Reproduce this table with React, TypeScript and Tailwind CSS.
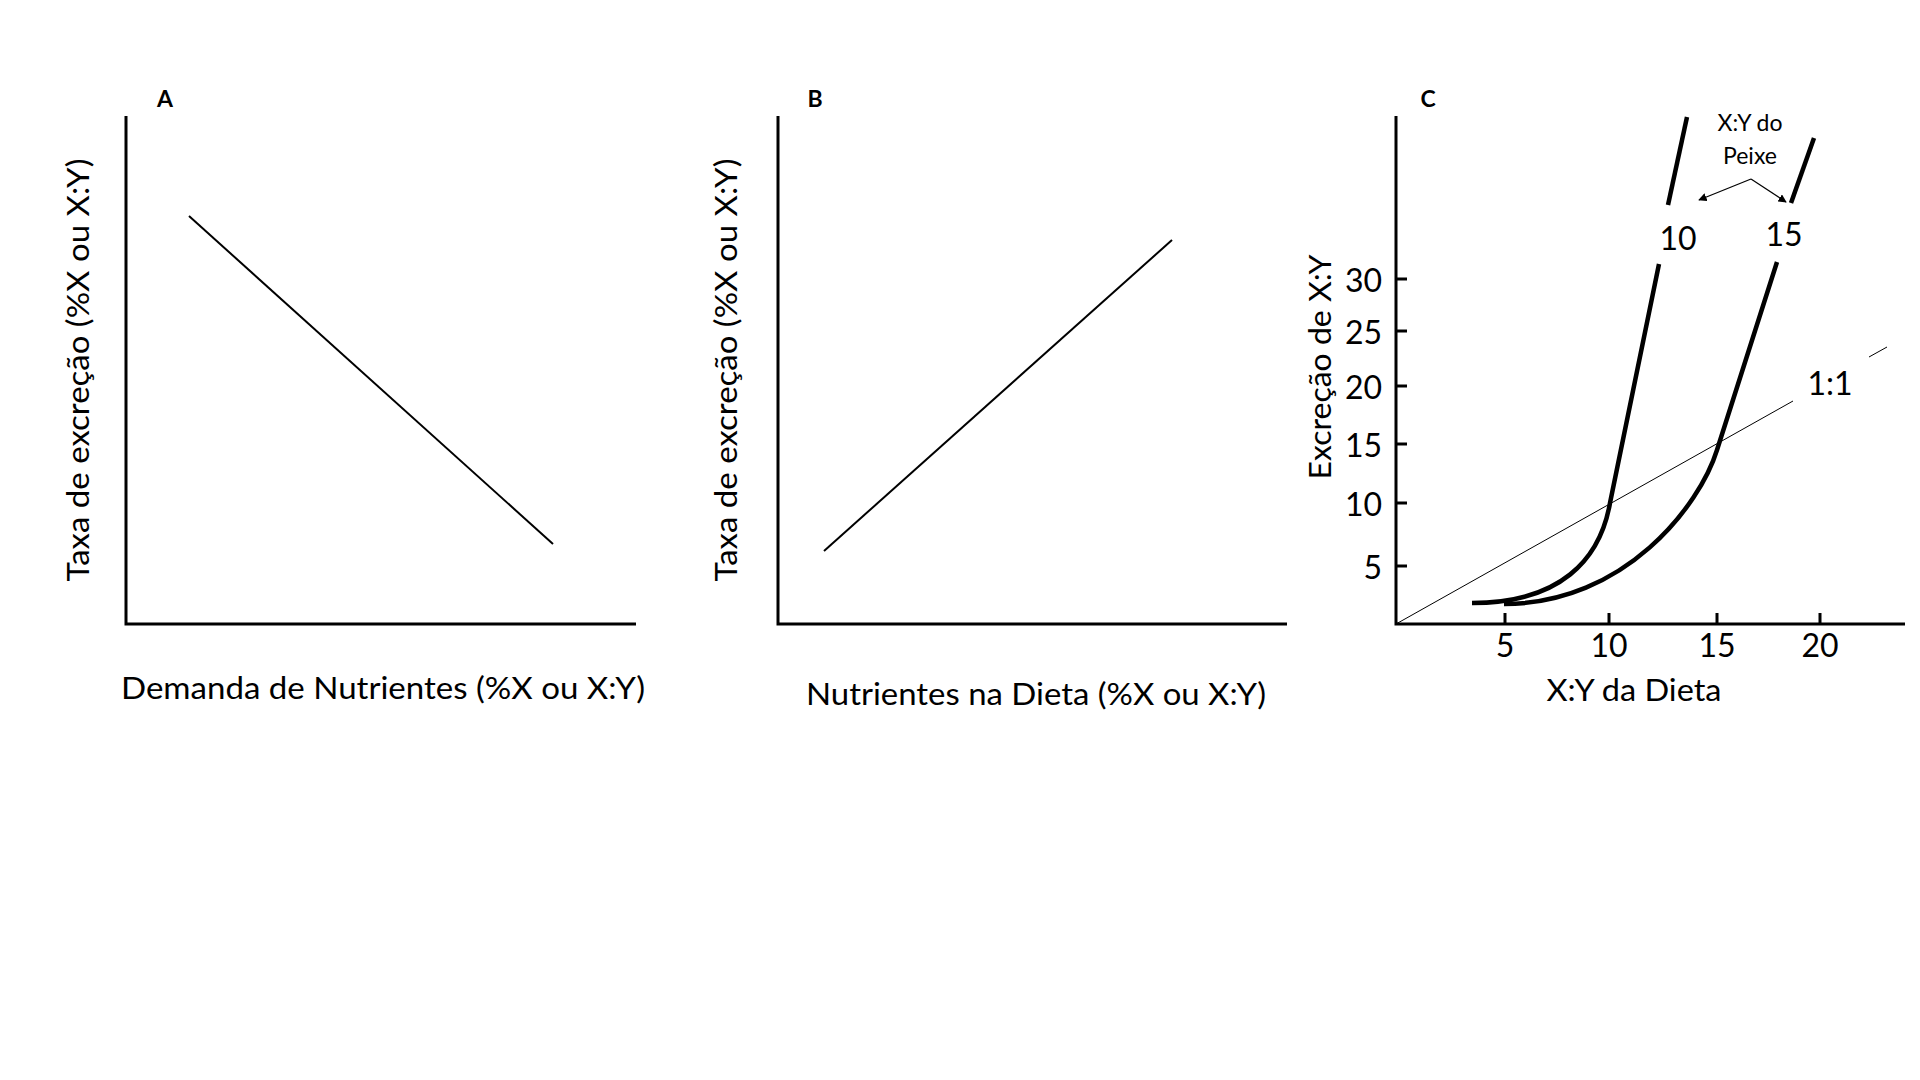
const PANEL_H = 760;

type Panel = {
  x: number;
  w: number;
};

function AxisTitle({
  x,
  y,
  len,
  rotate,
  children,
}: {
  x: number;
  y: number;
  len: number;
  rotate?: boolean;
  children: string;
}) {
  return (
    <text
      x={x}
      y={y}
      fontSize={31}
      textAnchor="middle"
      dominantBaseline="central"
      textLength={len}
      lengthAdjust="spacingAndGlyphs"
      transform={rotate ? `rotate(-90 ${x} ${y})` : undefined}
    >
      {children}
    </text>
  );
}

function Frame({ panel, children }: { panel: Panel; children: React.ReactNode }) {
  return (
    <div className="shrink-0" style={{ width: panel.w }}>
      <svg
        width={panel.w}
        height={PANEL_H}
        viewBox={`${panel.x} 0 ${panel.w} ${PANEL_H}`}
        className="block font-['Lato',sans-serif] fill-black"
      >
        {children}
      </svg>
    </div>
  );
}

function LineChart({
  panel,
  label,
  axisX,
  axisRight,
  line,
  yTitleX,
  xTitle,
}: {
  panel: Panel;
  label: { text: string; x: number };
  axisX: number;
  axisRight: number;
  line: [number, number, number, number];
  yTitleX: number;
  xTitle: { text: string; x: number; y: number; len: number };
}) {
  return (
    <Frame panel={panel}>
      <text x={label.x} y={98} fontSize={23} fontWeight={700} textAnchor="middle" dominantBaseline="central">
        {label.text}
      </text>
      <path d={`M${axisX} 116 V624 H${axisRight}`} fill="none" stroke="black" strokeWidth={3} />
      <line x1={line[0]} y1={line[1]} x2={line[2]} y2={line[3]} stroke="black" strokeWidth={2} />
      <AxisTitle x={yTitleX} y={370} len={423} rotate>
        Taxa de excreção (%X ou X:Y)
      </AxisTitle>
      <AxisTitle x={xTitle.x} y={xTitle.y} len={xTitle.len}>
        {xTitle.text}
      </AxisTitle>
    </Frame>
  );
}

const yTicks = [
  { v: "5", y: 566 },
  { v: "10", y: 503 },
  { v: "15", y: 444 },
  { v: "20", y: 386 },
  { v: "25", y: 331 },
  { v: "30", y: 279 },
];

const xTicks = [
  { v: "5", x: 1505 },
  { v: "10", x: 1609 },
  { v: "15", x: 1717 },
  { v: "20", x: 1820 },
];

function RatioChart({ panel }: { panel: Panel }) {
  return (
    <Frame panel={panel}>
      <defs>
        <marker id="head" viewBox="0 0 10 10" refX="9" refY="5" markerWidth="7" markerHeight="7" orient="auto">
          <path d="M0 0 L10 5 L0 10 z" fill="black" />
        </marker>
      </defs>
      <text x={1428} y={98} fontSize={23} fontWeight={700} textAnchor="middle" dominantBaseline="central">
        C
      </text>

      {/* axes */}
      <path d="M1396 116 V624 H1905" fill="none" stroke="black" strokeWidth={3} />
      {yTicks.map((t) => (
        <g key={t.v}>
          <line x1={1396} y1={t.y} x2={1407} y2={t.y} stroke="black" strokeWidth={3} />
          <text x={1382} y={t.y} fontSize={32} textAnchor="end" dominantBaseline="central">
            {t.v}
          </text>
        </g>
      ))}
      {xTicks.map((t) => (
        <g key={t.v}>
          <line x1={t.x} y1={613} x2={t.x} y2={624} stroke="black" strokeWidth={3} />
          <text x={t.x} y={644} fontSize={32} textAnchor="middle" dominantBaseline="central">
            {t.v}
          </text>
        </g>
      ))}
      <AxisTitle x={1319} y={367} len={225} rotate>
        Excreção de X:Y
      </AxisTitle>
      <AxisTitle x={1634} y={689} len={175}>
        X:Y da Dieta
      </AxisTitle>

      {/* 1:1 line */}
      <line x1={1396} y1={624} x2={1793} y2={401} stroke="black" strokeWidth={1} />
      <line x1={1869} y1={357} x2={1887} y2={347} stroke="black" strokeWidth={1} />
      <text x={1830} y={382} fontSize={32} textAnchor="middle" dominantBaseline="central">
        1:1
      </text>

      {/* curves */}
      <g fill="none" stroke="black" strokeWidth={4.5}>
        <path d="M1472 603 C1560 603 1600 560 1610 503 L1659 264" />
        <path d="M1668 205 L1687 117" />
        <path d="M1504 604 C1625 604 1700 505 1717 450 L1777 262" />
        <path d="M1791 203 L1814 138" />
      </g>
      <text x={1678} y={237} fontSize={32} textAnchor="middle" dominantBaseline="central">
        10
      </text>
      <text x={1784} y={233} fontSize={32} textAnchor="middle" dominantBaseline="central">
        15
      </text>

      {/* fish ratio note */}
      <text x={1750} y={122} fontSize={23} textAnchor="middle" dominantBaseline="central">
        X:Y do
      </text>
      <text x={1750} y={155} fontSize={23} textAnchor="middle" dominantBaseline="central">
        Peixe
      </text>
      <g fill="none" stroke="black" strokeWidth={1.2}>
        <line x1={1751} y1={179} x2={1699} y2={200} markerEnd="url(#head)" />
        <line x1={1751} y1={179} x2={1786} y2={202} markerEnd="url(#head)" />
      </g>
    </Frame>
  );
}

export default function App() {
  return (
    <div className="w-[1920px] h-[1080px] bg-white flex items-start">
      <LineChart
        panel={{ x: 0, w: 660 }}
        label={{ text: "A", x: 165 }}
        axisX={126}
        axisRight={636}
        line={[189, 216, 553, 544]}
        yTitleX={77}
        xTitle={{ text: "Demanda de Nutrientes (%X ou X:Y)", x: 383, y: 687, len: 524 }}
      />
      <LineChart
        panel={{ x: 660, w: 640 }}
        label={{ text: "B", x: 815 }}
        axisX={778}
        axisRight={1287}
        line={[824, 551, 1172, 240]}
        yTitleX={725}
        xTitle={{ text: "Nutrientes na Dieta (%X ou X:Y)", x: 1036, y: 693, len: 460 }}
      />
      <RatioChart panel={{ x: 1300, w: 620 }} />
    </div>
  );
}
